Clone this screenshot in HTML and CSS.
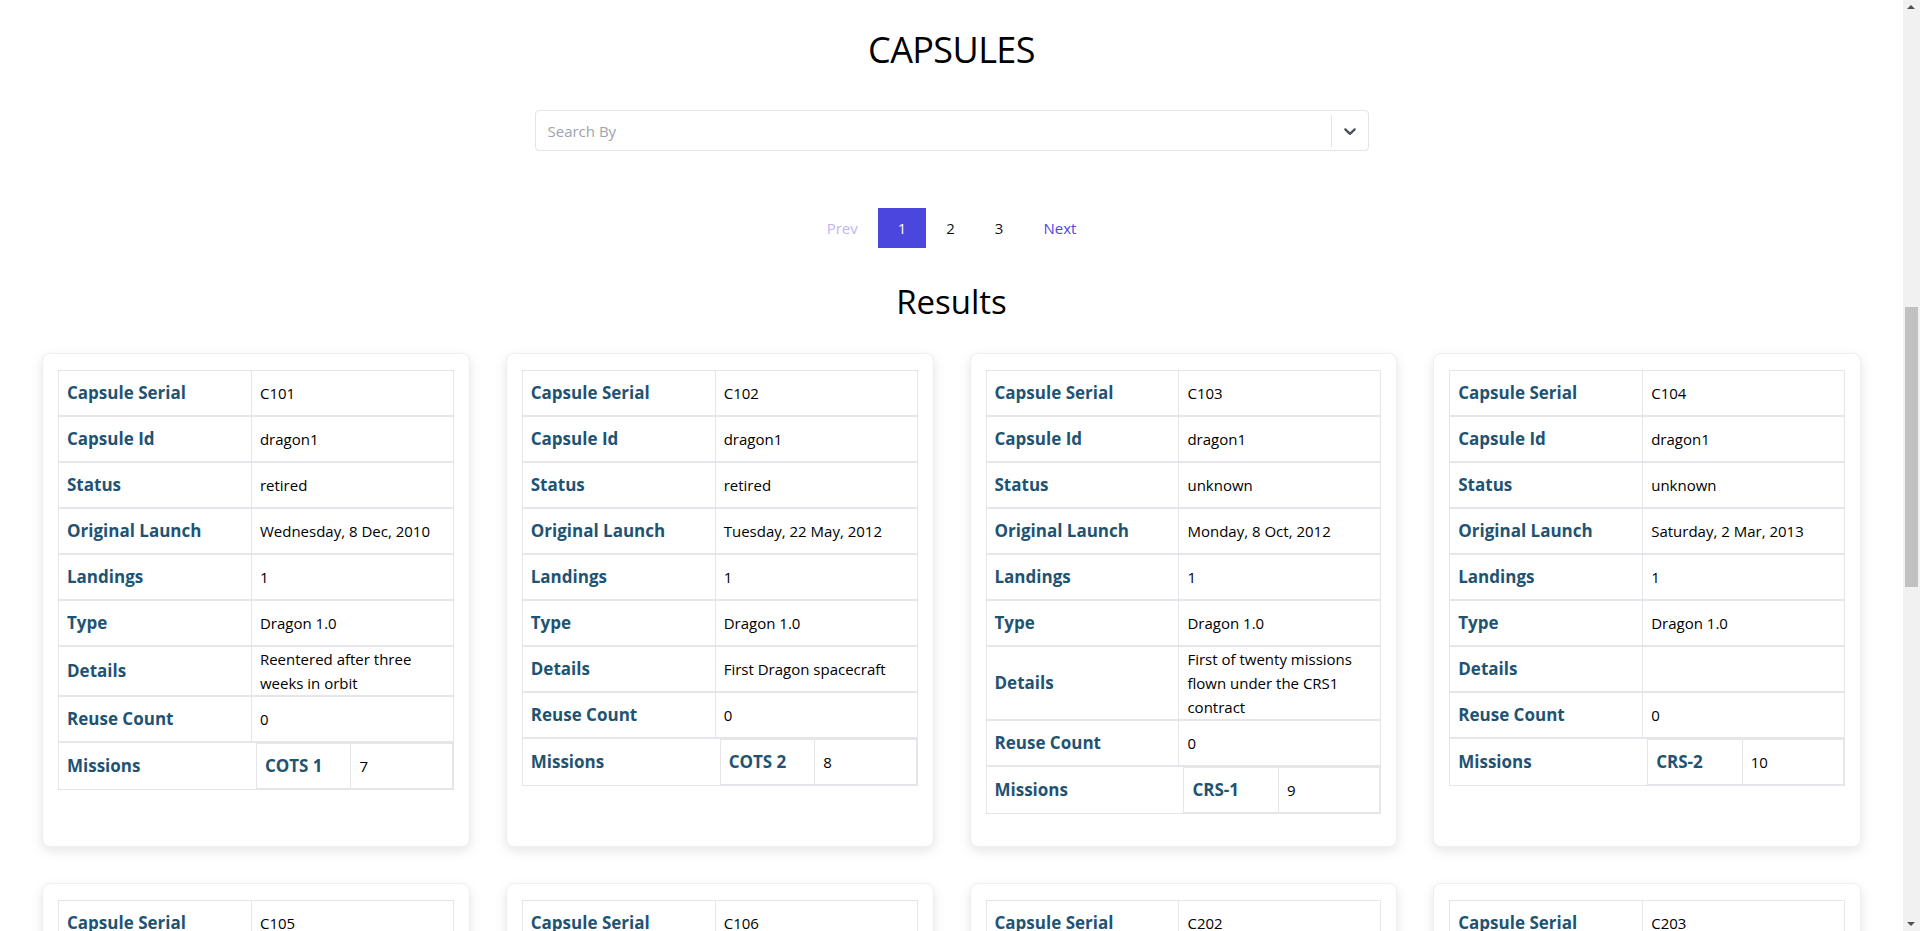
FILE: index.html
```html
<!DOCTYPE html>
<html lang="en">
<head>
<meta charset="utf-8">
<title>Capsules</title>
<link rel="stylesheet" href="styles.css">
</head>
<body>
<main class="page">
  <h1 class="title">CAPSULES</h1>
  <div class="search">
    <div class="search-value">Search By</div>
    <div class="search-indicators">
      <span class="search-sep"></span>
      <span class="search-arrow">
        <svg width="20" height="20" viewBox="0 0 20 20" aria-hidden="true"><path fill="currentColor" d="M4.516 7.548c0.436-0.446 1.043-0.481 1.576 0l3.908 3.747 3.908-3.747c0.533-0.481 1.141-0.446 1.574 0 0.436 0.445 0.408 1.197 0 1.615-0.406 0.418-4.695 4.502-4.695 4.502-0.217 0.223-0.502 0.335-0.787 0.335s-0.57-0.112-0.789-0.335c0 0-4.287-4.084-4.695-4.502s-0.436-1.17 0-1.615z"/></svg>
      </span>
    </div>
  </div>

  <nav class="pager">
    <span class="pager-item pager-prev">Prev</span>
    <span class="pager-item pager-active">1</span>
    <span class="pager-item">2</span>
    <span class="pager-item">3</span>
    <span class="pager-item pager-next">Next</span>
  </nav>

  <h2 class="results">Results</h2>

  <section class="grid">
    <article class="card">
      <div class="kv">
        <div class="kv-row"><div class="kv-key">Capsule Serial</div><div class="kv-val">C101</div></div>
        <div class="kv-row"><div class="kv-key">Capsule Id</div><div class="kv-val">dragon1</div></div>
        <div class="kv-row"><div class="kv-key">Status</div><div class="kv-val">retired</div></div>
        <div class="kv-row"><div class="kv-key">Original Launch</div><div class="kv-val">Wednesday, 8 Dec, 2010</div></div>
        <div class="kv-row"><div class="kv-key">Landings</div><div class="kv-val">1</div></div>
        <div class="kv-row"><div class="kv-key">Type</div><div class="kv-val">Dragon 1.0</div></div>
        <div class="kv-row"><div class="kv-key">Details</div><div class="kv-val">Reentered after three weeks in orbit</div></div>
        <div class="kv-row"><div class="kv-key">Reuse Count</div><div class="kv-val">0</div></div>
        <div class="kv-row kv-row-missions"><div class="kv-key">Missions</div><div class="mission"><div class="mission-name">COTS 1</div><div class="mission-flight">7</div></div></div>
      </div>
    </article>

    <article class="card">
      <div class="kv">
        <div class="kv-row"><div class="kv-key">Capsule Serial</div><div class="kv-val">C102</div></div>
        <div class="kv-row"><div class="kv-key">Capsule Id</div><div class="kv-val">dragon1</div></div>
        <div class="kv-row"><div class="kv-key">Status</div><div class="kv-val">retired</div></div>
        <div class="kv-row"><div class="kv-key">Original Launch</div><div class="kv-val">Tuesday, 22 May, 2012</div></div>
        <div class="kv-row"><div class="kv-key">Landings</div><div class="kv-val">1</div></div>
        <div class="kv-row"><div class="kv-key">Type</div><div class="kv-val">Dragon 1.0</div></div>
        <div class="kv-row"><div class="kv-key">Details</div><div class="kv-val">First Dragon spacecraft</div></div>
        <div class="kv-row"><div class="kv-key">Reuse Count</div><div class="kv-val">0</div></div>
        <div class="kv-row kv-row-missions"><div class="kv-key">Missions</div><div class="mission"><div class="mission-name">COTS 2</div><div class="mission-flight">8</div></div></div>
      </div>
    </article>

    <article class="card">
      <div class="kv">
        <div class="kv-row"><div class="kv-key">Capsule Serial</div><div class="kv-val">C103</div></div>
        <div class="kv-row"><div class="kv-key">Capsule Id</div><div class="kv-val">dragon1</div></div>
        <div class="kv-row"><div class="kv-key">Status</div><div class="kv-val">unknown</div></div>
        <div class="kv-row"><div class="kv-key">Original Launch</div><div class="kv-val">Monday, 8 Oct, 2012</div></div>
        <div class="kv-row"><div class="kv-key">Landings</div><div class="kv-val">1</div></div>
        <div class="kv-row"><div class="kv-key">Type</div><div class="kv-val">Dragon 1.0</div></div>
        <div class="kv-row"><div class="kv-key">Details</div><div class="kv-val">First of twenty missions flown under the CRS1 contract</div></div>
        <div class="kv-row"><div class="kv-key">Reuse Count</div><div class="kv-val">0</div></div>
        <div class="kv-row kv-row-missions"><div class="kv-key">Missions</div><div class="mission"><div class="mission-name">CRS-1</div><div class="mission-flight">9</div></div></div>
      </div>
    </article>

    <article class="card">
      <div class="kv">
        <div class="kv-row"><div class="kv-key">Capsule Serial</div><div class="kv-val">C104</div></div>
        <div class="kv-row"><div class="kv-key">Capsule Id</div><div class="kv-val">dragon1</div></div>
        <div class="kv-row"><div class="kv-key">Status</div><div class="kv-val">unknown</div></div>
        <div class="kv-row"><div class="kv-key">Original Launch</div><div class="kv-val">Saturday, 2 Mar, 2013</div></div>
        <div class="kv-row"><div class="kv-key">Landings</div><div class="kv-val">1</div></div>
        <div class="kv-row"><div class="kv-key">Type</div><div class="kv-val">Dragon 1.0</div></div>
        <div class="kv-row"><div class="kv-key">Details</div><div class="kv-val"></div></div>
        <div class="kv-row"><div class="kv-key">Reuse Count</div><div class="kv-val">0</div></div>
        <div class="kv-row kv-row-missions"><div class="kv-key">Missions</div><div class="mission"><div class="mission-name">CRS-2</div><div class="mission-flight">10</div></div></div>
      </div>
    </article>

    <article class="card">
      <div class="kv">
        <div class="kv-row"><div class="kv-key">Capsule Serial</div><div class="kv-val">C105</div></div>
        <div class="kv-row"><div class="kv-key">Capsule Id</div><div class="kv-val">dragon1</div></div>
        <div class="kv-row"><div class="kv-key">Status</div><div class="kv-val">unknown</div></div>
        <div class="kv-row"><div class="kv-key">Original Launch</div><div class="kv-val">Friday, 18 Apr, 2014</div></div>
        <div class="kv-row"><div class="kv-key">Landings</div><div class="kv-val">1</div></div>
        <div class="kv-row"><div class="kv-key">Type</div><div class="kv-val">Dragon 1.1</div></div>
        <div class="kv-row"><div class="kv-key">Details</div><div class="kv-val">First Dragon v1.1 capsule</div></div>
        <div class="kv-row"><div class="kv-key">Reuse Count</div><div class="kv-val">0</div></div>
        <div class="kv-row kv-row-missions"><div class="kv-key">Missions</div><div class="mission"><div class="mission-name">CRS-3</div><div class="mission-flight">14</div></div></div>
      </div>
    </article>

    <article class="card">
      <div class="kv">
        <div class="kv-row"><div class="kv-key">Capsule Serial</div><div class="kv-val">C106</div></div>
        <div class="kv-row"><div class="kv-key">Capsule Id</div><div class="kv-val">dragon1</div></div>
        <div class="kv-row"><div class="kv-key">Status</div><div class="kv-val">active</div></div>
        <div class="kv-row"><div class="kv-key">Original Launch</div><div class="kv-val">Sunday, 21 Sep, 2014</div></div>
        <div class="kv-row"><div class="kv-key">Landings</div><div class="kv-val">3</div></div>
        <div class="kv-row"><div class="kv-key">Type</div><div class="kv-val">Dragon 1.1</div></div>
        <div class="kv-row"><div class="kv-key">Details</div><div class="kv-val"></div></div>
        <div class="kv-row"><div class="kv-key">Reuse Count</div><div class="kv-val">2</div></div>
        <div class="kv-row kv-row-missions"><div class="kv-key">Missions</div><div class="mission"><div class="mission-name">CRS-4</div><div class="mission-flight">18</div></div></div>
      </div>
    </article>

    <article class="card">
      <div class="kv">
        <div class="kv-row"><div class="kv-key">Capsule Serial</div><div class="kv-val">C202</div></div>
        <div class="kv-row"><div class="kv-key">Capsule Id</div><div class="kv-val">dragon2</div></div>
        <div class="kv-row"><div class="kv-key">Status</div><div class="kv-val">active</div></div>
        <div class="kv-row"><div class="kv-key">Original Launch</div><div class="kv-val">Sunday, 19 Jan, 2020</div></div>
        <div class="kv-row"><div class="kv-key">Landings</div><div class="kv-val">1</div></div>
        <div class="kv-row"><div class="kv-key">Type</div><div class="kv-val">Dragon 2.0</div></div>
        <div class="kv-row"><div class="kv-key">Details</div><div class="kv-val">Capsule used for the in-flight abort test</div></div>
        <div class="kv-row"><div class="kv-key">Reuse Count</div><div class="kv-val">0</div></div>
        <div class="kv-row kv-row-missions"><div class="kv-key">Missions</div><div class="mission"><div class="mission-name">IFA</div><div class="mission-flight">86</div></div></div>
      </div>
    </article>

    <article class="card">
      <div class="kv">
        <div class="kv-row"><div class="kv-key">Capsule Serial</div><div class="kv-val">C203</div></div>
        <div class="kv-row"><div class="kv-key">Capsule Id</div><div class="kv-val">dragon2</div></div>
        <div class="kv-row"><div class="kv-key">Status</div><div class="kv-val">destroyed</div></div>
        <div class="kv-row"><div class="kv-key">Original Launch</div><div class="kv-val">Saturday, 2 Mar, 2019</div></div>
        <div class="kv-row"><div class="kv-key">Landings</div><div class="kv-val">1</div></div>
        <div class="kv-row"><div class="kv-key">Type</div><div class="kv-val">Dragon 2.0</div></div>
        <div class="kv-row"><div class="kv-key">Details</div><div class="kv-val">Capsule destroyed during a static fire test</div></div>
        <div class="kv-row"><div class="kv-key">Reuse Count</div><div class="kv-val">0</div></div>
        <div class="kv-row kv-row-missions"><div class="kv-key">Missions</div><div class="mission"><div class="mission-name">DM-1</div><div class="mission-flight">78</div></div></div>
      </div>
    </article>
  </section>
</main>

<div class="scrollbar" aria-hidden="true">
  <span class="scrollbar-up"></span>
  <span class="scrollbar-thumb"></span>
  <span class="scrollbar-down"></span>
</div>
</body>
</html>
```

FILE: styles.css
```css
body {
  margin: 0;
  background: #ffffff;
  color: #111111;
  font-family: "Open Sans", "Noto Sans", "Liberation Sans", sans-serif;
}

.page {
  display: flex;
  flex-direction: column;
  align-items: center;
  margin-right: 17px;
  padding-bottom: 40px;
}

.title {
  margin: 28px 0 0;
  font-size: 36px;
  line-height: 44px;
  font-weight: 400;
  color: #000;
  letter-spacing: -0.6px;
}

.search {
  margin-top: 38px;
  width: 834px;
  height: 41px;
  box-sizing: border-box;
  border: 1px solid #e3e4e8;
  border-radius: 4px;
  display: flex;
  align-items: center;
  background: #fff;
}

.search-value {
  flex: 1;
  padding-left: 12px;
  font-size: 15px;
  color: #9ea3ad;
}

.search-indicators {
  display: flex;
  align-items: center;
  height: 100%;
}

.search-sep {
  width: 1px;
  height: 32px;
  background: #e3e4e8;
}

.search-arrow {
  width: 36px;
  display: flex;
  justify-content: center;
  align-items: center;
  color: #4b5060;
}

.pager {
  margin-top: 57px;
  display: flex;
  height: 40px;
}

.pager-item {
  padding: 0 20px;
  line-height: 40px;
  font-size: 15px;
  color: #111;
}

.pager-prev {
  color: #bcb8f2;
}

.pager-next {
  color: #4f46e5;
}

.pager-active {
  background: #4b46dd;
  color: #fff;
}

.results {
  margin: 33px 0 0;
  font-size: 33px;
  line-height: 42px;
  font-weight: 400;
  color: #000;
}

.grid {
  align-self: stretch;
  margin-top: 30px;
  padding: 0 42px;
  display: grid;
  grid-template-columns: repeat(4, 1fr);
  gap: 36px;
}

.card {
  background: #fff;
  border: 1px solid #efefef;
  border-radius: 8px;
  box-shadow: 0 4px 12px rgba(0, 0, 0, 0.10);
  padding: 16px 15px 32px;
}

.kv-row {
  display: grid;
  grid-template-columns: 49% 51%;
  border: 1px solid #e5e6eb;
  font-size: 15px;
  line-height: 24px;
}

.kv-key {
  padding: 10px 8px;
  font-size: 17px;
  font-weight: 700;
  color: #1f5373;
  border-right: 1px solid #e5e6eb;
  display: flex;
  align-items: center;
}

.kv-val {
  padding: 0 8px;
  display: flex;
  align-items: center;
  color: #000;
}

.kv-row-missions {
  grid-template-columns: 50% 50%;
}

.kv-row-missions .kv-key {
  border-right: none;
}

.mission {
  display: grid;
  grid-template-columns: 48.5% 51.5%;
  border: 1px solid #e5e6eb;
}

.mission-name {
  padding: 10px 8px;
  font-size: 17px;
  font-weight: 700;
  color: #1f5373;
  border-right: 1px solid #e5e6eb;
}

.mission-flight {
  padding: 10px 8px;
  color: #000;
}

.scrollbar {
  position: fixed;
  top: 0;
  right: 0;
  width: 17px;
  height: 100vh;
  background: #f1f1f1;
}

.scrollbar-thumb {
  position: absolute;
  top: 307px;
  left: 2px;
  width: 13px;
  height: 280px;
  background: #c1c1c1;
}

.scrollbar-up,
.scrollbar-down {
  position: absolute;
  left: 4px;
  width: 0;
  height: 0;
  border-left: 4px solid transparent;
  border-right: 4px solid transparent;
}

.scrollbar-up {
  top: 5px;
  border-bottom: 4px solid #505050;
}

.scrollbar-down {
  bottom: 5px;
  border-top: 4px solid #505050;
}
```
